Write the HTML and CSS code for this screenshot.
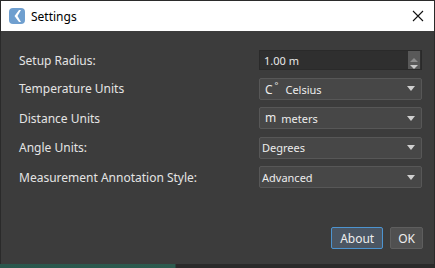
FILE: index.html
```html
<!DOCTYPE html>
<html lang="en">
<head>
    <meta charset="UTF-8">
    <title>Settings</title>
    <link rel="stylesheet" href="styles.css">
</head>
<body>
    <div class="window">
        <div class="titlebar">
            <svg class="app-icon" width="16" height="16" viewBox="0 0 16 16">
                <rect x="0" y="0" width="16" height="16" rx="4" fill="#6f9fcf"/>
                <path d="M10 2 L5.5 8 L10 14 L12 14 L8.5 8 L12 2 Z" fill="#ffffff"/>
            </svg>
            <span class="title">Settings</span>
            <svg class="close" width="12" height="12" viewBox="0 0 12 12">
                <path d="M1 1 L11 11 M11 1 L1 11" stroke="#111" stroke-width="1.1"/>
            </svg>
        </div>

        <div class="content">
            <div class="form">
                <label>Setup Radius:</label>
                <div class="spin">
                    <span>1.00 m</span>
                    <div class="spin-btns">
                        <span class="up"></span>
                        <span class="down"></span>
                    </div>
                </div>

                <label>Temperature Units</label>
                <div class="combo"><span><span class="unit">C<sup>°</sup></span>Celsius</span><span class="arrow"></span></div>

                <label>Distance Units</label>
                <div class="combo"><span><span class="unit m">m</span>meters</span><span class="arrow"></span></div>

                <label>Angle Units:</label>
                <div class="combo plain"><span>Degrees</span><span class="arrow"></span></div>

                <label>Measurement Annotation Style:</label>
                <div class="combo plain"><span>Advanced</span><span class="arrow"></span></div>
            </div>

            <div class="buttons">
                <button class="about">About</button>
                <button>OK</button>
            </div>
        </div>
    </div>
    <div class="desktop"></div>
</body>
</html>
```

FILE: styles.css
```css
html, body {
    margin: 0;
    height: 268px;
    overflow: hidden;
    background: #222;
}

body {
    font-family: "Noto Sans", "Open Sans", sans-serif;
    font-size: 12px;
}

.window {
    height: 264px;
    display: flex;
    flex-direction: column;
    border-left: 1px solid #2a2a2a;
    border-right: 1px solid #2a2a2a;
    box-sizing: border-box;
    background: #3c3c3c;
}

.titlebar {
    height: 31px;
    box-sizing: border-box;
    border-top: 1px solid #2b2b2b;
    background: #ffffff;
    display: flex;
    align-items: center;
    padding: 0 10px 0 8px;
}

.app-icon {
    margin-right: 6px;
}

.title {
    color: #000;
    font-size: 12px;
    flex: 1;
}

.content {
    flex: 1;
    display: flex;
    flex-direction: column;
    padding: 19px 11px 15px 18px;
}

.form {
    display: grid;
    grid-template-columns: 240px 1fr;
    row-gap: 7.5px;
    align-items: center;
    margin-right: 1px;
}

.form label {
    color: #e4e4e4;
    font-size: 12px;
}

.spin {
    height: 20px;
    background: #2f2f2f;
    border: 1px solid #2a2a2a;
    display: flex;
    align-items: center;
    color: #e8e8e8;
    font-size: 11px;
    padding-left: 4px;
    box-sizing: border-box;
}

.spin span:first-child {
    flex: 1;
}

.spin-btns {
    width: 12px;
    height: 18px;
    margin-right: 1px;
    background: #595959;
    display: flex;
    flex-direction: column;
    align-items: center;
    justify-content: center;
    gap: 3px;
}

.spin-btns .up {
    border-left: 4px solid transparent;
    border-right: 4px solid transparent;
    border-bottom: 4px solid #8c8c8c;
}

.spin-btns .down {
    border-left: 4px solid transparent;
    border-right: 4px solid transparent;
    border-top: 4px solid #c8c8c8;
}

.combo {
    height: 22px;
    box-sizing: border-box;
    background: #474747;
    border: 1px solid #575757;
    border-radius: 2px;
    display: flex;
    align-items: center;
    justify-content: space-between;
    padding: 0 6px 0 5px;
    color: #ececec;
    font-size: 11px;
}

.combo.plain {
    padding-left: 2px;
}

.unit {
    font-size: 12px;
    margin-right: 7px;
}

.unit.m {
    margin-right: 5px;
    position: relative;
    top: -1px;
}

.unit sup {
    font-size: 9px;
    margin-left: 2px;
}

.arrow {
    border-left: 4px solid transparent;
    border-right: 4px solid transparent;
    border-top: 5px solid #d0d0d0;
}

.buttons {
    margin-top: auto;
    display: flex;
    justify-content: flex-end;
    gap: 7px;
}

.buttons button {
    height: 22px;
    padding: 0 7px;
    font-family: "Noto Sans", "Open Sans", sans-serif;
    font-size: 12px;
    color: #eeeeee;
    background: #505050;
    border: 1px solid #5e5e5e;
    border-radius: 2px;
}

.buttons button.about {
    padding: 0 8px;
    background: #4b5663;
    border-color: #4d94d0;
}

.desktop {
    height: 4px;
    background: linear-gradient(90deg, #2a564c 0, #2d5a4e 175px, #2a2a2a 176px, #2a2a2a 100%);
}
```
